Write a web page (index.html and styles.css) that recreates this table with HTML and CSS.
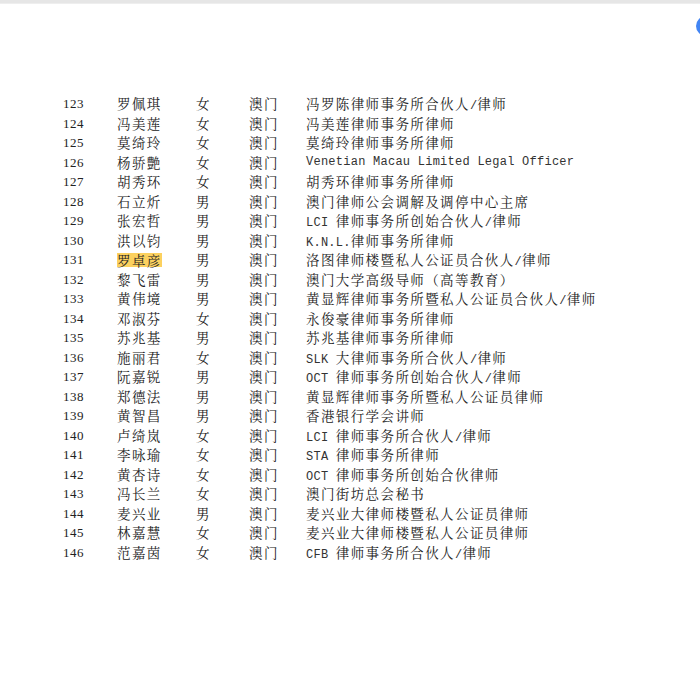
FILE: index.html
```html
<!DOCTYPE html>
<html lang="zh-CN">
<head>
<meta charset="utf-8">
<title>名单</title>
<link rel="stylesheet" href="styles.css">
</head>
<body>
<div class="topbar"></div>
<div class="fab"></div>
<div class="list">
  <div class="row"><span class="num">123</span><span>罗佩琪</span><span>女</span><span>澳门</span><span>冯罗陈律师事务所合伙人<span class="lat">/</span>律师</span></div>
  <div class="row"><span class="num">124</span><span>冯美莲</span><span>女</span><span>澳门</span><span>冯美莲律师事务所律师</span></div>
  <div class="row"><span class="num">125</span><span>莫绮玲</span><span>女</span><span>澳门</span><span>莫绮玲律师事务所律师</span></div>
  <div class="row"><span class="num">126</span><span>杨骄艶</span><span>女</span><span>澳门</span><span class="lat">Venetian Macau Limited Legal Officer</span></div>
  <div class="row"><span class="num">127</span><span>胡秀环</span><span>女</span><span>澳门</span><span>胡秀环律师事务所律师</span></div>
  <div class="row"><span class="num">128</span><span>石立炘</span><span>男</span><span>澳门</span><span>澳门律师公会调解及调停中心主席</span></div>
  <div class="row"><span class="num">129</span><span>张宏哲</span><span>男</span><span>澳门</span><span><span class="lat">LCI </span>律师事务所创始合伙人<span class="lat">/</span>律师</span></div>
  <div class="row"><span class="num">130</span><span>洪以钧</span><span>男</span><span>澳门</span><span><span class="lat">K.N.L.</span>律师事务所律师</span></div>
  <div class="row"><span class="num">131</span><span><span class="mark">罗卓彦</span></span><span>男</span><span>澳门</span><span>洛图律师楼暨私人公证员合伙人<span class="lat">/</span>律师</span></div>
  <div class="row"><span class="num">132</span><span>黎飞雷</span><span>男</span><span>澳门</span><span>澳门大学高级导师（高等教育）</span></div>
  <div class="row"><span class="num">133</span><span>黄伟境</span><span>男</span><span>澳门</span><span>黄显辉律师事务所暨私人公证员合伙人<span class="lat">/</span>律师</span></div>
  <div class="row"><span class="num">134</span><span>邓淑芬</span><span>女</span><span>澳门</span><span>永俊豪律师事务所律师</span></div>
  <div class="row"><span class="num">135</span><span>苏兆基</span><span>男</span><span>澳门</span><span>苏兆基律师事务所律师</span></div>
  <div class="row"><span class="num">136</span><span>施丽君</span><span>女</span><span>澳门</span><span><span class="lat">SLK </span>大律师事务所合伙人<span class="lat">/</span>律师</span></div>
  <div class="row"><span class="num">137</span><span>阮嘉锐</span><span>男</span><span>澳门</span><span><span class="lat">OCT </span>律师事务所创始合伙人<span class="lat">/</span>律师</span></div>
  <div class="row"><span class="num">138</span><span>郑德法</span><span>男</span><span>澳门</span><span>黄显辉律师事务所暨私人公证员律师</span></div>
  <div class="row"><span class="num">139</span><span>黄智昌</span><span>男</span><span>澳门</span><span>香港银行学会讲师</span></div>
  <div class="row"><span class="num">140</span><span>卢绮岚</span><span>女</span><span>澳门</span><span><span class="lat">LCI </span>律师事务所合伙人<span class="lat">/</span>律师</span></div>
  <div class="row"><span class="num">141</span><span>李咏瑜</span><span>女</span><span>澳门</span><span><span class="lat">STA </span>律师事务所律师</span></div>
  <div class="row"><span class="num">142</span><span>黄杏诗</span><span>女</span><span>澳门</span><span><span class="lat">OCT </span>律师事务所创始合伙律师</span></div>
  <div class="row"><span class="num">143</span><span>冯长兰</span><span>女</span><span>澳门</span><span>澳门街坊总会秘书</span></div>
  <div class="row"><span class="num">144</span><span>麦兴业</span><span>男</span><span>澳门</span><span>麦兴业大律师楼暨私人公证员律师</span></div>
  <div class="row"><span class="num">145</span><span>林嘉慧</span><span>女</span><span>澳门</span><span>麦兴业大律师楼暨私人公证员律师</span></div>
  <div class="row"><span class="num">146</span><span>范嘉茵</span><span>女</span><span>澳门</span><span><span class="lat">CFB </span>律师事务所合伙人<span class="lat">/</span>律师</span></div>
</div>
</body>
</html>
```

FILE: styles.css
```css
html, body {
  margin: 0;
  padding: 0;
  background: #ffffff;
}

body {
  font-family: "Noto Serif CJK SC", "Noto Sans CJK SC", serif;
  font-size: 13.5px;
  letter-spacing: 1.4px;
  color: #222222;
  width: 700px;
  height: 700px;
  overflow: hidden;
  position: relative;
}

.topbar {
  height: 3px;
  background: #e6e6e6;
  border-bottom: 1px solid #eeeeee;
}

.fab {
  position: absolute;
  left: 696px;
  top: 16px;
  width: 20px;
  height: 20px;
  border-radius: 50%;
  background: #4285f4;
}

.list {
  padding: 90px 0 0 63px;
}

.row {
  display: grid;
  grid-template-columns: 54px 79px 53px 57px auto;
  height: 19.5px;
  line-height: 19.5px;
  white-space: nowrap;
}

.num {
  font-family: "Liberation Serif", serif;
  font-size: 13px;
  letter-spacing: 0.5px;
}

.lat {
  font-family: "Liberation Mono", monospace;
  font-size: 12px;
  letter-spacing: 0.25px;
  color: #333333;
}

.mark {
  display: inline-block;
  background: #fcd15f;
  line-height: 14px;
  height: 14px;
  vertical-align: -1px;
  margin-right: -2px;
}
```
